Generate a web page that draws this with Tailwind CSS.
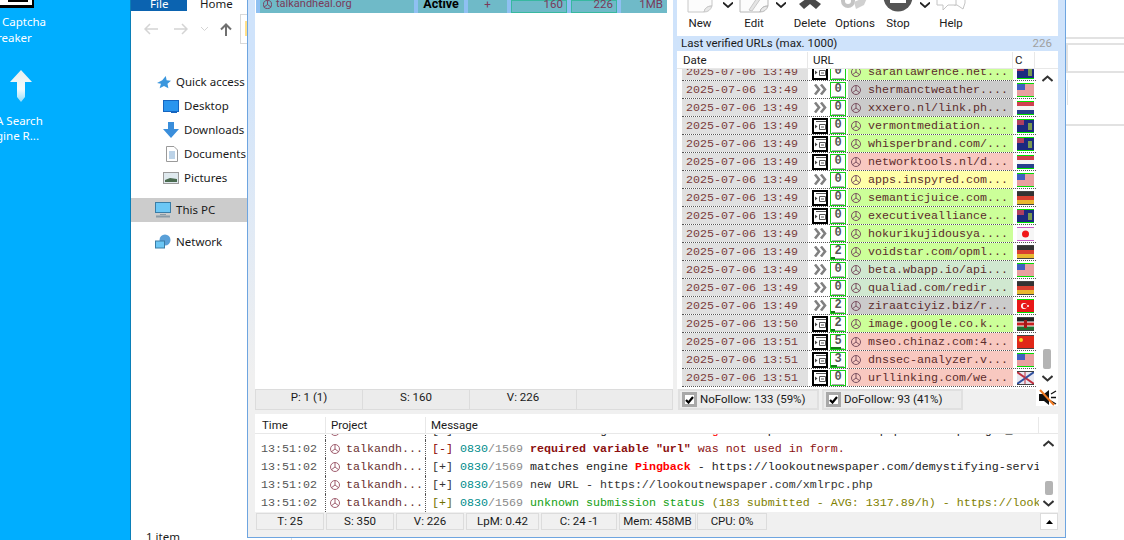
<!DOCTYPE html>
<html lang="en">
  <head>
    <meta charset="UTF-8" />
    <title>Desktop</title>
    <script src="https://cdn.jsdelivr.net/npm/@tailwindcss/browser@4"></script>
  </head>
  <body class="relative h-[540px] w-[1124px] overflow-hidden bg-[#00aeff] font-['Noto_Sans',sans-serif] text-[11.5px] text-[#1a1a1a]">
    <!-- desktop icons -->
    <div class="absolute left-0 top-[-6px] h-[14px] w-[34px] border-r-2 border-b-[3px] border-black bg-white"></div>
    <div class="absolute left-[8px] top-0 h-[2px] w-[20px] bg-black"></div>
    <div class="absolute left-[2px] top-[14px] leading-[16px] text-white">Captcha<br /><span class="ml-[-5px]">reaker</span></div>
    <svg class="absolute left-[9px] top-[69px]" width="24" height="34" viewBox="0 0 24 34">
      <defs>
        <linearGradient id="up" x1="0" y1="0" x2="0" y2="1"><stop offset="0" stop-color="#e8eeee" /><stop offset="0.6" stop-color="#f4fbfd" /><stop offset="1" stop-color="#8fdcfb" /></linearGradient>
      </defs>
      <path d="M12 1 L23 13 H16 V28 L12 33 L8 28 V13 H1 Z" fill="url(#up)" />
    </svg>
    <div class="absolute left-[-4px] top-[113px] leading-[15px] text-white">A Search<br />gine R...</div>

    <!-- explorer window -->
    <div class="absolute left-[130px] top-0 h-[540px] w-[994px] border-l border-[#0a7fb8] bg-white">
      <div class="flex h-[11px] overflow-hidden leading-[7px]">
        <div class="w-[56px] bg-[#0b63b0] pl-[19px] text-white">File</div>
        <div class="pl-[13px]">Home</div>
      </div>
      <div class="flex h-[30px] items-center pl-[13px] pt-[6px]">
        <svg width="14" height="12" viewBox="0 0 14 12" fill="none" stroke="#d4d4d4" stroke-width="1.500"><path d="M14 6 H1 M6 1 L1 6 L6 11" /></svg>
        <svg class="ml-[16px]" width="14" height="12" viewBox="0 0 14 12" fill="none" stroke="#d4d4d4" stroke-width="1.500"><path d="M0 6 H13 M8 1 L13 6 L8 11" /></svg>
        <svg class="ml-[13px]" width="7" height="4" viewBox="0 0 7 4" fill="none" stroke="#d4d4d4"><path d="M0 0 L3.500 3.500 L7 0" /></svg>
        <svg class="ml-[12px]" width="12" height="13" viewBox="0 0 12 13" fill="none" stroke="#707070" stroke-width="2"><path d="M6 13 V1.500 M1 6.500 L6 1.500 L11 6.500" /></svg>
        <div class="ml-[8px] h-[30px] w-[12px] border-y border-l border-[#d9d9d9] pl-[4px] pt-[6px]"><div class="h-[15px] w-[6px] bg-[#ffe08a]"></div></div>
      </div>
      <nav class="w-[116px] pt-[29px]">
        <div class="flex h-[24px] items-center gap-[5px] pl-[26px]">
          <svg width="14" height="14" viewBox="0 0 16 16"><path d="M10 1 L11 6 L16 6.500 L12 10 L13 15 L8 12.500 L3 15 L4.500 10 L0 9 L6 6 Z" fill="#3a96dd" /></svg>
          Quick access
        </div>
        <div class="flex h-[24px] items-center gap-[5px] pl-[32px]">
          <svg width="16" height="13" viewBox="0 0 16 13"><rect x=".5" y=".5" width="15" height="11" fill="#2a95ee" stroke="#1565c0" /><path d="M8 12.500 H14" stroke="#1565c0" /></svg>
          Desktop
        </div>
        <div class="flex h-[24px] items-center gap-[5px] pl-[32px]">
          <svg width="16" height="16" viewBox="0 0 16 16"><path d="M5 0 H11 V7 H16 L8 16 L0 7 H5 Z" fill="#3a8edb" /></svg>
          Downloads
        </div>
        <div class="flex h-[24px] items-center gap-[6px] pl-[35px]">
          <svg width="12" height="16" viewBox="0 0 12 16"><path d="M.5.500 H8 L11.500 4 V15.500 H.5 Z" fill="#fff" stroke="#9a9a9a" /><path d="M3 6 H9 M3 8 H9 M3 10 H9 M3 12 H9" stroke="#7aa7d0" /></svg>
          Documents
        </div>
        <div class="flex h-[24px] items-center gap-[5px] pl-[32px]">
          <svg width="16" height="12" viewBox="0 0 16 12"><rect x=".5" y=".5" width="15" height="11" fill="#dfe9ee" stroke="#9a9a9a" /><path d="M2 8 L7 6 L14 7 V10 H2 Z" fill="#4a6b50" /></svg>
          Pictures
        </div>
        <div class="mt-[8px] flex h-[24px] items-center gap-[5px] bg-[#cccccc] pl-[24px]">
          <svg width="16" height="16" viewBox="0 0 16 16"><rect x=".5" y=".5" width="15" height="10" fill="#6cc7f5" stroke="#3a7ca5" /><path d="M1 14.500 H15" stroke="#8a9aa5" stroke-width="2" /><path d="M5 12.500 H11" stroke="#8a9aa5" /></svg>
          This PC
        </div>
        <div class="mt-[8px] flex h-[24px] items-center gap-[5px] pl-[24px]">
          <svg width="16" height="16" viewBox="0 0 16 16"><circle cx="10" cy="6" r="5.500" fill="#5aa0d8" /><rect x=".5" y="7" width="9" height="7" fill="#6cc7f5" stroke="#3a7ca5" /></svg>
          Network
        </div>
      </nav>
      <div class="absolute left-[15px] top-[530px] h-[10px] w-[146px] overflow-hidden border-r border-[#e0e0e0] leading-[13px]">1 item</div>
      <!-- explorer's file pane, seen to the right of the app -->
      <div class="absolute left-[935px] right-0 top-[37px] h-[2px] bg-[#e2e2e2]"></div>
      <div class="absolute left-[935px] right-0 top-[43px] h-[30px] border-y-2 border-l-2 border-[#e2e2e2]"></div>
      <div class="absolute left-[936px] top-[80px] h-[25px] w-px bg-[#e2e2e2]"></div>
      <div class="absolute left-[935px] right-0 top-[124px] h-[2px] bg-[#e2e2e2]"></div>
    </div>

    <!-- app window -->
    <div class="absolute left-[247px] top-0 flex h-[538px] w-[819px] flex-col border border-t-0 border-[#6ea5e0] bg-linear-to-b from-[#cfe3fb] from-10% to-[#f0f0f0] to-70% font-['Roboto',sans-serif]">
      <div class="flex h-[389px] pl-[7px]">
        <!-- projects -->
        <div class="w-[418px] bg-white pl-px">
          <div class="flex h-[13px] w-[411px] gap-[4px] overflow-hidden bg-[#8fc0f2] pl-[4px] leading-[8px] text-[#7a3a5a]">
            <div class="flex w-[154px] items-start gap-[4px] bg-[#6fbac8] pl-[3px] text-[11px]">
              <svg width="9" height="9" viewBox="0 0 10 10" fill="none" stroke="#7a3a5a"><circle cx="5" cy="5" r="4.500" /><path d="M5 5 V.5 M5 5 L1 8 M5 5 L9 8" /></svg>
              talkandheal.org
            </div>
            <div class="w-[46px] bg-[#6fbac8] text-center text-[12.5px] font-bold text-black">Active</div>
            <div class="w-[39px] bg-[#6fbac8] text-center">+</div>
            <div class="w-[56px] border border-[#38b8a0] bg-[#6fbac8] pr-[3px] text-right leading-[6px]">160</div>
            <div class="w-[46px] border border-[#38b8a0] bg-[#6fbac8] pr-[3px] text-right leading-[6px]">226</div>
            <div class="w-[46px] bg-[#6fbac8] pr-[4px] text-right">1MB</div>
          </div>
        </div>
        <!-- verified urls -->
        <div class="ml-[4px] flex w-[381px] flex-col bg-white">
          <div class="flex h-[36px] overflow-hidden text-center leading-[15px] text-[#202020]">
            <div class="w-[46px]">
              <svg class="mx-auto" width="26" height="16" viewBox="0 0 26 16"><path d="M1 -6 H25 V6 Q18 6 17 12 H1 Z" fill="#fcfcfc" stroke="#c8c8c8" /><path d="M25 6 Q18 6 17 12 Q23 12 25 6 Z" fill="#e8e8e8" stroke="#c8c8c8" /></svg>
              New
            </div>
            <svg class="mt-[2px]" width="10" height="6" viewBox="0 0 10 6" fill="none" stroke="#222" stroke-width="1.800"><path d="M0 .5 L5 5 L10 .5" /></svg>
            <div class="w-[42px]">
              <svg class="mx-auto" width="30" height="16" viewBox="0 0 30 16"><path d="M1 -6 H29 V6 Q22 6 21 12 H1 Z" fill="#fcfcfc" stroke="#b8b8b8" /><path d="M29 6 Q22 6 21 12 Q27 12 29 6 Z" fill="#e8e8e8" stroke="#b8b8b8" /><path d="M10 10 L18 -2 L22 -2 L13 11 Z" fill="#e4e4e4" stroke="#c8c8c8" /></svg>
              Edit
            </div>
            <svg class="ml-px mt-[2px]" width="10" height="6" viewBox="0 0 10 6" fill="none" stroke="#222" stroke-width="1.800"><path d="M0 .5 L5 5 L10 .5" /></svg>
            <div class="ml-px w-[46px]">
              <svg class="mx-auto" width="26" height="16" viewBox="0 0 26 16"><path d="M13 -4 L24 4 L19 9 L13 4 L7 9 L2 4 Z" fill="#4a4a4a" /></svg>
              Delete
            </div>
            <div class="w-[44px]">
              <svg class="mx-auto" width="30" height="16" viewBox="0 0 30 16"><circle cx="8" cy="1" r="7" fill="#c4c4c4" /><circle cx="8" cy="1" r="3" fill="#fff" /><path d="M14 2 L28 -4 L24 5 L16 9 Z" fill="#d0d0d0" /></svg>
              Options
            </div>
            <div class="w-[42px]">
              <svg class="mx-auto" width="30" height="16" viewBox="0 0 30 16"><circle cx="15" cy="-3" r="14.500" fill="#555" /><rect x="7" y="-6" width="16" height="9" fill="#fff" /></svg>
              Stop
            </div>
            <svg class="ml-px mt-[2px]" width="10" height="6" viewBox="0 0 10 6" fill="none" stroke="#222" stroke-width="1.800"><path d="M0 .5 L5 5 L10 .5" /></svg>
            <div class="ml-px w-[40px]">
              <svg class="mx-auto" width="30" height="16" viewBox="0 0 30 16" fill="#fff" stroke="#c4c4c4"><path d="M18 -4 H29 V3 L27 9 L21 5 H18 Z" /><path d="M1 -4 H20 V5 H12 L7 10 V5 H1 Z" /></svg>
              Help
            </div>
          </div>
          <div class="flex h-[15px] items-center justify-between bg-[#cfe3fb] pl-[4px] pr-[6px]">
            <span>Last verified URLs (max. 1000)</span><span class="text-[#a0a0a0]">226</span>
          </div>
          <div class="flex h-[18px] border-b border-[#e8e8e8] pt-px leading-[16px]">
            <div class="w-[131px] border-r border-[#e8e8e8] pl-[6px]">Date</div>
            <div class="w-[205px] border-r border-[#e8e8e8] pl-[5px]">URL</div>
            <div class="w-[22px] border-r border-[#e8e8e8] pl-[2px]">C</div>
          </div>
          <div class="flex h-[320px] overflow-hidden">
            <div class="ml-[5px] mt-[-6px] w-[354px] font-['Liberation_Mono',monospace] text-[11.67px]" id="urls"></div>
            <div class="flex flex-1 flex-col items-center pb-[7px] pt-[6px]">
              <svg width="11" height="7" viewBox="0 0 11 7" fill="none" stroke="#333" stroke-width="2"><path d="M.5 6 L5.500 1.500 L10.500 6" /></svg>
              <div class="mt-auto h-[20px] w-[8px] rounded-[2px] bg-[#b4b4b4]"></div>
              <svg class="mt-[6px]" width="11" height="7" viewBox="0 0 11 7" fill="none" stroke="#333" stroke-width="2"><path d="M.5 1 L5.500 5.500 L10.500 1" /></svg>
            </div>
          </div>
        </div>
      </div>

      <!-- bars under the lists -->
      <div class="flex h-[21px] pl-[7px] leading-[15px]">
        <div class="flex w-[418px] gap-px border border-[#dcdcdc] bg-[#dcdcdc] text-center">
          <div class="w-[106px] bg-[#ececec]">P: 1 (1)</div>
          <div class="w-[106px] bg-[#ececec]">S: 160</div>
          <div class="w-[106px] bg-[#ececec]">V: 226</div>
          <div class="flex-1 bg-[#ececec]"></div>
        </div>
        <div class="ml-[5px] flex w-[380px] items-center gap-[3px]">
          <label class="flex h-full w-[141px] items-center gap-[2px] border-2 border-[#e0e0e0] bg-[#ececec] pl-[2px]">
            <span class="flex h-[15px] w-[15px] items-center justify-center border-[3px] border-[#a8a8a8] bg-white">
              <svg width="9" height="8" viewBox="0 0 9 8" fill="none" stroke="#000" stroke-width="2.200"><path d="M1 4 L3.500 6.500 L8 1" /></svg>
            </span>
            <span class="pl-px">NoFollow: 133 (59%)</span>
          </label>
          <label class="flex h-full w-[141px] items-center gap-[2px] border-2 border-[#e0e0e0] bg-[#ececec] pl-[2px]">
            <span class="flex h-[15px] w-[15px] items-center justify-center border-[3px] border-[#a8a8a8] bg-white">
              <svg width="9" height="8" viewBox="0 0 9 8" fill="none" stroke="#000" stroke-width="2.200"><path d="M1 4 L3.500 6.500 L8 1" /></svg>
            </span>
            <span class="pl-px">DoFollow: 93 (41%)</span>
          </label>
          <div class="mb-[4px] ml-auto flex h-[17px] w-[22px] items-center justify-center bg-white">
            <svg width="20" height="17" viewBox="0 0 20 17">
              <path d="M2 5 H7 L12 1 V16 L7 12 H2 Z" fill="#111" />
              <path d="M14 5 L19 2 M14 8.500 H19 M14 12 L19 15" stroke="#111" stroke-width="1.300" />
              <path d="M3 1 L17 16" stroke="#f07820" stroke-width="2" />
            </svg>
          </div>
        </div>
      </div>

      <!-- log -->
      <div class="ml-[7px] mt-[4px] flex h-[98px] w-[803px] flex-col bg-white">
        <div class="flex h-[20px] border-b border-[#e8e8e8] pt-[3px] leading-[16px]">
          <div class="w-[71px] border-r border-[#e8e8e8] pl-[7px]">Time</div>
          <div class="w-[100px] border-r border-[#e8e8e8] pl-[5px]">Project</div>
          <div class="w-[613px] border-r border-[#e8e8e8] pl-[5px]">Message</div>
        </div>
        <div class="flex h-[78px] overflow-hidden">
          <div class="mt-[-12px] w-[784px] font-['Liberation_Mono',monospace] text-[11.67px]" id="log"></div>
          <div class="flex flex-1 flex-col items-center pb-[5px] pt-[6px]">
            <svg width="11" height="7" viewBox="0 0 11 7" fill="none" stroke="#333" stroke-width="2"><path d="M.5 6 L5.500 1.500 L10.500 6" /></svg>
            <div class="mt-auto h-[14px] w-[8px] rounded-[2px] bg-[#b4b4b4]"></div>
            <svg class="mt-[5px]" width="11" height="7" viewBox="0 0 11 7" fill="none" stroke="#333" stroke-width="2"><path d="M.5 1 L5.500 5.500 L10.500 1" /></svg>
          </div>
        </div>
      </div>

      <!-- status bar -->
      <div class="ml-[8px] mt-px flex h-[17px] w-[802px] gap-[2px] text-center leading-[14px]">
        <div class="w-[68px] border border-[#dcdcdc]">T: 25</div>
        <div class="w-[68px] border border-[#dcdcdc]">S: 350</div>
        <div class="w-[68px] border border-[#dcdcdc]">V: 226</div>
        <div class="w-[73px] border border-[#dcdcdc]">LpM: 0.42</div>
        <div class="w-[76px] border border-[#dcdcdc]">C: 24 -1</div>
        <div class="w-[77px] border border-[#dcdcdc]">Mem: 458MB</div>
        <div class="ml-[-1px] w-[70px] border border-[#dcdcdc]">CPU: 0%</div>
        <button class="ml-auto flex h-[17px] w-[18px] items-center justify-center border border-[#dcdcdc] bg-white">
          <svg width="7" height="4" viewBox="0 0 7 4"><path d="M0 4 L3.500 0 L7 4 Z" fill="#000" /></svg>
        </button>
      </div>
    </div>

    <script>
      const GREEN = "#ccff99", GRAY = "#cbcbcb", PINK = "#f8c8c0", YELLOW = "#ffffa8", PALE = "#d0e8d0";

      const flags = {
        au: '<rect width="17" height="12" y="1" fill="#1c2a80"/><rect width="7" height="5" y="1" fill="#b04060"/><rect x="11" y="4" width="4" height="7" fill="#7a9a50"/>',
        us: '<rect width="17" height="12" y="1" fill="#f0f0f0"/><path d="M0 2h17M0 4h17M0 6h17M0 8h17M0 10h17M0 12h17" stroke="#e05050"/><rect width="8" height="6" y="1" fill="#4060c0"/>',
        nl: '<rect width="17" height="4" y="1" fill="#d04050"/><rect width="17" height="4" y="5" fill="#f4f4f4"/><rect width="17" height="4" y="9" fill="#28408c"/>',
        de: '<rect width="17" height="4" y="1" fill="#333"/><rect width="17" height="4" y="5" fill="#d84030"/><rect width="17" height="4" y="9" fill="#e8b830"/>',
        jp: '<rect width="17" height="12" y="1" fill="#f6f6f6"/><circle cx="8.500" cy="7" r="3.500" fill="#f01818"/>',
        tr: '<rect width="17" height="12" y="1" fill="#e81818"/><circle cx="7" cy="7" r="3" fill="#fff"/><circle cx="8" cy="7" r="2.300" fill="#e81818"/><circle cx="11" cy="7" r="1" fill="#fff"/>',
        ke: '<rect width="17" height="4" y="1" fill="#222"/><rect width="17" height="4" y="5" fill="#c82020"/><rect width="17" height="4" y="9" fill="#207030"/><path d="M0 5h17M0 9h17" stroke="#fff"/><rect x="7" y="3" width="3" height="8" fill="#a01818"/>',
        cn: '<rect width="17" height="12" y="1" fill="#e02818"/><circle cx="4" cy="5" r="2" fill="#f8d820"/>',
        gb: '<rect width="17" height="12" y="1" fill="#e8e8f0"/><path d="M0 1 L17 13" stroke="#c03040" stroke-width="2"/><path d="M0 13 L17 1" stroke="#3050a0" stroke-width="2"/><path d="M8 1 V13" stroke="#c03040"/>',
      };

      // date, count, list icon?, url, row colour, flag
      const urls = [
        ["13:49", 0, 1, "sarahlawrence.net...", GREEN, "au"],
        ["13:49", 0, 0, "shermanctweather....", GRAY, "us"],
        ["13:49", 0, 0, "xxxero.nl/link.ph...", GRAY, "nl"],
        ["13:49", 0, 1, "vermontmediation....", GREEN, "au"],
        ["13:49", 0, 1, "whisperbrand.com/...", GREEN, "au"],
        ["13:49", 0, 1, "networktools.nl/d...", PINK, "nl"],
        ["13:49", 0, 0, "apps.inspyred.com...", YELLOW, "us"],
        ["13:49", 0, 1, "semanticjuice.com...", GREEN, "de"],
        ["13:49", 0, 1, "executivealliance...", GREEN, "au"],
        ["13:49", 0, 0, "hokurikujidousya....", GREEN, "jp"],
        ["13:49", 2, 0, "voidstar.com/opml...", GREEN, "de"],
        ["13:49", 0, 0, "beta.wbapp.io/api...", PALE, "us"],
        ["13:49", 0, 0, "qualiad.com/redir...", PALE, "de"],
        ["13:49", 2, 0, "ziraatciyiz.biz/r...", GRAY, "tr"],
        ["13:50", 2, 1, "image.google.co.k...", GREEN, "ke"],
        ["13:51", 5, 1, "mseo.chinaz.com:4...", PINK, "cn"],
        ["13:51", 3, 1, "dnssec-analyzer.v...", PINK, "us"],
        ["13:51", 0, 1, "urllinking.com/we...", PINK, "gb"],
      ];

      const wheel = (color) =>
        `<svg class="shrink-0" width="10" height="10" viewBox="0 0 10 10" fill="none" stroke="${color}"><circle cx="5" cy="5" r="4.500"/><path d="M5 5 V.5 M5 5 L1 8 M5 5 L9 8"/></svg>`;

      const listIcon =
        '<div class="flex h-[16px] w-[16px] items-center justify-center border-2 border-black bg-white"><svg width="11" height="9" viewBox="0 0 11 9" fill="none" stroke="#555"><path d="M1 .5 H11 M4.500 3.500 H10.500 V8.500 H4.500 Z M6 6 H9"/><path d="M0 3.500 L2.500 5.500 L0 7.500 Z" fill="#444" stroke="none"/></svg></div>';
      const arrowIcon =
        '<div class="flex h-[16px] w-[16px] items-center justify-center"><svg width="13" height="11" viewBox="0 0 13 11" fill="none" stroke="#808080" stroke-width="2.600"><path d="M1 .5 L5 5.500 L1 10.500 M7 .5 L11 5.500 L7 10.500"/></svg></div>';

      document.getElementById("urls").innerHTML = urls
        .map(([time, count, hasList, url, color, flag]) => {
          const bar = count ? `<div class="absolute bottom-0 left-0 h-[2px] bg-[#1a7a1a]" style="width:${count * 2}px"></div>` : "";
          const edge = flag === "jp" ? "#c860c8" : flag === "gb" || flag === "cn" || flag === "de" || flag === "ke" ? "#444" : "#00e000";
          return `<div class="flex h-[18px] items-center border-b border-dotted border-[#555]">
            <div class="h-[17px] w-[126px] bg-[#e0e0e0] pl-[4px] leading-[18px] text-[#7a3c3c]">2025-07-06 ${time}</div>
            <div class="ml-[4px] w-[18px]">${hasList ? listIcon : arrowIcon}</div>
            <div class="relative h-[16px] w-[16px] border border-[#18d018] text-center text-[12px] font-bold leading-[13px] text-[#555]">${count}<div class="absolute bottom-0 left-px right-px h-px bg-[#aaa]"></div>${bar}</div>
            <div class="ml-[2px] flex h-[17px] w-[165px] items-center gap-[7px] pl-[3px] text-[#5c2c2c]" style="background:${color}">${wheel("#7a5060")}<span class="pt-[2px]">${url}</span></div>
            <svg class="ml-[4px]" width="17" height="14" viewBox="0 0 17 14">${flags[flag]}<path d="M0 .5H17M0 13.500H17" stroke="${edge}"/></svg>
          </div>`;
        })
        .join("");

      const teal = '<span class="text-[#008c8c]">0830</span><span class="text-[#8a8a8a]">/1569</span> ';
      const logRows = [
        ["[+]", '<span class="text-[#222]">matches engine </span><span class="text-[#ff0000]">General Large</span><span class="text-[#222]"> - https://lookoutnewspaper.com/wp-login_subs</span>'],
        ['<span class="text-[#8b0000]">[-]</span>', '<span class="font-bold text-[#8b1010]">required variable "url"</span><span class="text-[#8b1010]"> was not used in form.</span>'],
        ["[+]", '<span class="text-[#222]">matches engine </span><span class="font-bold text-[#ff0000]">Pingback</span><span class="text-[#222]"> - https://lookoutnewspaper.com/demystifying-servi</span>'],
        ["[+]", '<span class="text-[#333]">new URL - https://lookoutnewspaper.com/xmlrpc.php</span>'],
        ['<span class="text-[#707000]">[+]</span>', '<span class="text-[#12a012]">unknown submission status</span><span class="text-[#808000]"> (183 submitted - AVG: 1317.89/h) - https://look</span>'],
      ];

      document.getElementById("log").innerHTML = logRows
        .map(([sign, msg]) =>
          `<div class="flex h-[18px] items-center leading-[18px]">
            <div class="h-full w-[71px] shrink-0 border-r border-dotted border-[#555] pl-[6px] text-[#555]">13:51:02</div>
            <div class="flex h-full w-[100px] shrink-0 items-center gap-[6px] border-r border-dotted border-[#555] pl-[4px] text-[#6a3030]">${wheel("#a06070")}<span>talkandh...</span></div>
            <div class="w-[613px] overflow-hidden whitespace-pre pl-[6px] text-[#333]">${sign} ${teal}${msg}</div>
          </div>`)
        .join("");
    </script>
  </body>
</html>
